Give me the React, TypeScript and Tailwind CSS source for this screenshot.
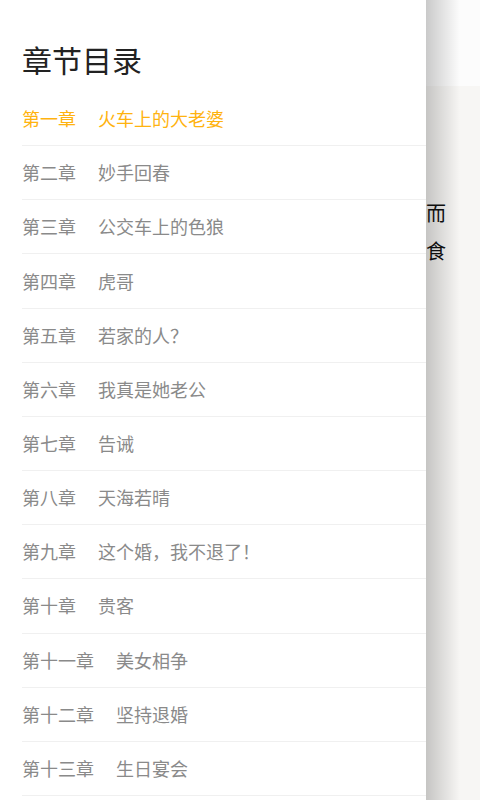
import React from 'react'

const chapters = [
  { no: '第一章', title: '火车上的大老婆' },
  { no: '第二章', title: '妙手回春' },
  { no: '第三章', title: '公交车上的色狼' },
  { no: '第四章', title: '虎哥' },
  { no: '第五章', title: '若家的人？' },
  { no: '第六章', title: '我真是她老公' },
  { no: '第七章', title: '告诫' },
  { no: '第八章', title: '天海若晴' },
  { no: '第九章', title: '这个婚，我不退了！' },
  { no: '第十章', title: '贵客' },
  { no: '第十一章', title: '美女相争' },
  { no: '第十二章', title: '坚持退婚' },
  { no: '第十三章', title: '生日宴会' },
]

export default function App() {
  const current = 0

  return (
    <div
      className="flex w-[480px] h-[800px] overflow-hidden bg-white"
      style={{ fontFamily: '"Noto Sans CJK SC", "Noto Sans", sans-serif' }}
    >
      {/* Drawer: chapter list */}
      <div className="w-[426px] shrink-0 bg-white">
        <div className="h-[92px] pt-[41px] pl-[22px]">
          <h1 className="text-[30px] leading-[36px] text-[#222]">章节目录</h1>
        </div>
        <ul className="ml-[22px]">
          {chapters.map((c, i) => (
            <li
              key={c.no}
              className="h-[54.17px] flex items-center border-b border-[#f0f0f0] pb-px text-[18px] leading-none"
            >
              <span className={i === current ? 'text-[#ffb30f]' : 'text-[#8a8a8a]'}>{c.no}</span>
              <span className={i === current ? 'ml-[22px] text-[#ffb30f]' : 'ml-[22px] text-[#8a8a8a]'}>{c.title}</span>
            </li>
          ))}
        </ul>
      </div>

      {/* Reader page behind the drawer */}
      <div className="relative flex-1 flex flex-col">
        <div className="h-[86px] bg-[#fcfcfc]" />
        <div className="flex-1 bg-[#f7f6f4] pt-[108px]">
          <p className="text-[20px] leading-[38px] text-[#111]">而</p>
          <p className="text-[20px] leading-[38px] text-[#111]">食</p>
        </div>
        <div className="absolute inset-y-0 left-0 w-[34px] bg-gradient-to-r from-black/20 via-black/10 to-transparent" />
      </div>
    </div>
  )
}
